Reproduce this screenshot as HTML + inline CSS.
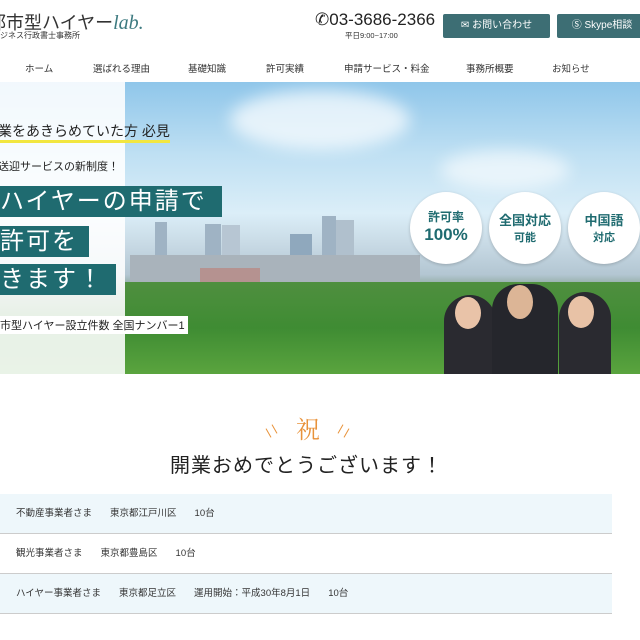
<!DOCTYPE html>
<html><head><meta charset="utf-8"><style>
*{margin:0;padding:0;box-sizing:border-box}
body{width:640px;height:640px;overflow:hidden;background:#fff;font-family:"Liberation Sans","Noto Sans CJK JP",sans-serif;color:#333;position:relative}
.a{position:absolute;white-space:nowrap}
.btn{position:absolute;top:14px;height:24px;background:#3d6e74;color:#fff;font-size:10px;line-height:24px;text-align:center;border-radius:2px}
.nav{position:absolute;top:61px;font-size:9.5px;color:#333}
.tb{position:absolute;background:#1f6b70;color:#fff;font-size:24px;line-height:31px;padding:0 6px 0 0;letter-spacing:2px}
.circ{position:absolute;width:72px;height:72px;border-radius:50%;background:#fff;color:#1f6b70;font-weight:bold;text-align:center;box-shadow:0 1px 3px rgba(0,0,0,.2)}
.row{position:absolute;left:0;width:612px;height:40px;border-bottom:1px solid #ccc;font-size:9.5px;line-height:40px;padding-left:16px;color:#333}
.row span{margin-right:18px}
.bd{position:absolute;background:#9fb3c4}
.ln{position:absolute;width:1px;height:10px;background:#e8923a}
</style></head><body>
<div class="a" style="left:-12px;top:9px;font-size:18px;color:#333">都市型ハイヤー<span style="font-family:'Liberation Serif',serif;font-style:italic;color:#3d7a80;font-size:20px">lab.</span></div>
<div class="a" style="left:-8px;top:30px;font-size:8px;color:#333">ビジネス行政書士事務所</div>
<div class="a" style="left:315px;top:10px;font-size:17px;color:#222">✆03-3686-2366</div>
<div class="a" style="left:345px;top:30px;font-size:7.5px;color:#333">平日9:00~17:00</div>
<div class="btn" style="left:443px;width:107px">✉ お問い合わせ</div>
<div class="btn" style="left:557px;width:90px">Ⓢ Skype相談</div>
<div class="nav" style="left:25px">ホーム</div>
<div class="nav" style="left:93px">選ばれる理由</div>
<div class="nav" style="left:188px">基礎知識</div>
<div class="nav" style="left:266px">許可実績</div>
<div class="nav" style="left:344px">申請サービス・料金</div>
<div class="nav" style="left:466px">事務所概要</div>
<div class="nav" style="left:552px">お知らせ</div>
<div class="a" style="left:0;top:82px;width:640px;height:292px;background:linear-gradient(#8fc6ea 0%,#bfe0f3 25%,#dbeef8 45%,#c9dbe6 55%,#b3c6d2 66%,#7a9a84 72%,#3f8a38 80%,#4b9a3c 100%)"></div>
<div class="bd" style="left:155px;top:222px;width:12px;height:60px"></div>
<div class="bd" style="left:205px;top:224px;width:16px;height:58px"></div>
<div class="bd" style="left:222px;top:225px;width:18px;height:57px;background:#b7c6d3"></div>
<div class="bd" style="left:290px;top:234px;width:22px;height:50px;background:#8fa8bd"></div>
<div class="bd" style="left:322px;top:216px;width:14px;height:68px"></div>
<div class="bd" style="left:336px;top:220px;width:18px;height:64px;background:#b0c0cd"></div>
<div class="bd" style="left:130px;top:255px;width:290px;height:30px;background:#a9b3bb"></div>
<div class="bd" style="left:200px;top:268px;width:60px;height:16px;background:#b59290"></div>
<div class="a" style="left:125px;top:282px;width:515px;height:92px;background:linear-gradient(#4f8f3f,#3f8c33 50%,#5aa43e)"></div>
<div class="a" style="left:230px;top:90px;width:180px;height:60px;border-radius:50%;background:rgba(255,255,255,.7);filter:blur(8px)"></div>
<div class="a" style="left:440px;top:150px;width:130px;height:40px;border-radius:50%;background:rgba(255,255,255,.6);filter:blur(8px)"></div>
<div class="a" style="left:0;top:82px;width:125px;height:292px;background:rgba(255,255,255,.88)"></div>
<div class="a" style="left:-2px;top:122px;font-size:14px;color:#222;border-bottom:3px solid #f2e640;line-height:18px">業をあきらめていた方 必見</div>
<div class="a" style="left:-2px;top:158px;font-size:11px;color:#222">送迎サービスの新制度！</div>
<div class="tb" style="left:0;top:186px;width:222px">ハイヤーの申請で</div>
<div class="tb" style="left:0;top:226px;width:89px">許可を</div>
<div class="tb" style="left:0;top:264px;width:116px">きます！</div>
<div class="a" style="left:0;top:316px;background:#fff;font-size:11px;padding:1px 3px 1px 0;color:#222">市型ハイヤー設立件数 全国ナンバー1</div>
<div class="circ" style="left:410px;top:192px;padding-top:16px"><div style="font-size:12px">許可率</div><div style="font-size:17px">100%</div></div>
<div class="circ" style="left:489px;top:192px;padding-top:18px"><div style="font-size:13px">全国対応</div><div style="font-size:11px">可能</div></div>
<div class="circ" style="left:568px;top:192px;padding-top:18px"><div style="font-size:13px">中国語</div><div style="font-size:11px">対応</div></div>
<div class="a" style="left:444px;top:295px;width:52px;height:79px;border-radius:26px 26px 0 0;background:#2a2a30"></div>
<div class="a" style="left:455px;top:297px;width:26px;height:32px;border-radius:50%;background:#e9c3a8"></div>
<div class="a" style="left:492px;top:284px;width:66px;height:90px;border-radius:26px 26px 0 0;background:#25262c"></div>
<div class="a" style="left:507px;top:285px;width:26px;height:34px;border-radius:50%;background:#dcb596"></div>
<div class="a" style="left:559px;top:292px;width:52px;height:82px;border-radius:26px 26px 0 0;background:#2a2a30"></div>
<div class="a" style="left:568px;top:296px;width:26px;height:32px;border-radius:50%;background:#e8c2a6"></div>
<div class="a" style="left:296px;top:410px;font-size:24px;color:#e8923a;font-family:'Noto Serif CJK SC',serif">祝</div>
<div class="ln" style="left:268px;top:428px;transform:rotate(-30deg)"></div>
<div class="ln" style="left:274px;top:424px;transform:rotate(-30deg)"></div>
<div class="ln" style="left:340px;top:424px;transform:rotate(30deg)"></div>
<div class="ln" style="left:346px;top:428px;transform:rotate(30deg)"></div>
<div class="a" style="left:170px;top:449px;font-size:20px;color:#222;letter-spacing:1px">開業おめでとうございます！</div>
<div class="row" style="top:494px;background:#eef7fb"><span>不動産事業者さま</span><span>東京都江戸川区</span><span>10台</span></div>
<div class="row" style="top:534px"><span>観光事業者さま</span><span>東京都豊島区</span><span>10台</span></div>
<div class="row" style="top:574px;background:#eef7fb"><span>ハイヤー事業者さま</span><span>東京都足立区</span><span>運用開始：平成30年8月1日</span><span>10台</span></div>
</body></html>
